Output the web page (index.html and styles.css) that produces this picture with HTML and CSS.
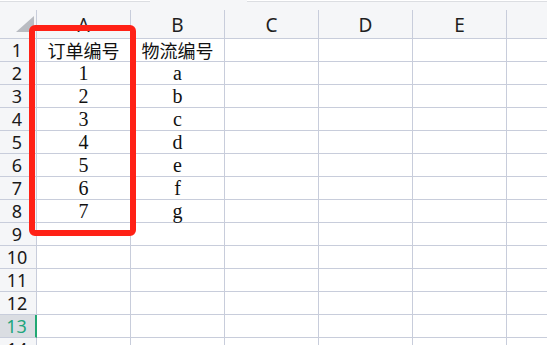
FILE: index.html
```html
<!DOCTYPE html>
<html lang="zh-CN">
<head>
  <meta charset="UTF-8">
  <title>工作表</title>
  <link rel="stylesheet" href="styles.css">
</head>
<body>
  <div class="topbar">
    <div class="box box-left"></div>
    <div class="box-gap"></div>
    <div class="box box-right"></div>
  </div>

  <div class="sheet">
    <div class="cell corner">
      <svg width="18" height="16" viewBox="0 0 18 16"><polygon points="0,16 18,16 18,0" fill="#b9bcc2"/></svg>
    </div>
    <div class="cell colhead">A</div>
    <div class="cell colhead">B</div>
    <div class="cell colhead">C</div>
    <div class="cell colhead">D</div>
    <div class="cell colhead">E</div>
    <div class="cell colhead"></div>

    <div class="cell rowhead">1</div>
    <div class="cell data cjk">订单编号</div>
    <div class="cell data cjk">物流编号</div>
    <div class="cell"></div><div class="cell"></div><div class="cell"></div><div class="cell"></div>

    <div class="cell rowhead">2</div>
    <div class="cell data">1</div><div class="cell data">a</div>
    <div class="cell"></div><div class="cell"></div><div class="cell"></div><div class="cell"></div>

    <div class="cell rowhead">3</div>
    <div class="cell data">2</div><div class="cell data">b</div>
    <div class="cell"></div><div class="cell"></div><div class="cell"></div><div class="cell"></div>

    <div class="cell rowhead">4</div>
    <div class="cell data">3</div><div class="cell data">c</div>
    <div class="cell"></div><div class="cell"></div><div class="cell"></div><div class="cell"></div>

    <div class="cell rowhead">5</div>
    <div class="cell data">4</div><div class="cell data">d</div>
    <div class="cell"></div><div class="cell"></div><div class="cell"></div><div class="cell"></div>

    <div class="cell rowhead">6</div>
    <div class="cell data">5</div><div class="cell data">e</div>
    <div class="cell"></div><div class="cell"></div><div class="cell"></div><div class="cell"></div>

    <div class="cell rowhead">7</div>
    <div class="cell data">6</div><div class="cell data">f</div>
    <div class="cell"></div><div class="cell"></div><div class="cell"></div><div class="cell"></div>

    <div class="cell rowhead">8</div>
    <div class="cell data">7</div><div class="cell data">g</div>
    <div class="cell"></div><div class="cell"></div><div class="cell"></div><div class="cell"></div>

    <div class="cell rowhead">9</div>
    <div class="cell"></div><div class="cell"></div><div class="cell"></div>
    <div class="cell"></div><div class="cell"></div><div class="cell"></div>

    <div class="cell rowhead">10</div>
    <div class="cell"></div><div class="cell"></div><div class="cell"></div>
    <div class="cell"></div><div class="cell"></div><div class="cell"></div>

    <div class="cell rowhead">11</div>
    <div class="cell"></div><div class="cell"></div><div class="cell"></div>
    <div class="cell"></div><div class="cell"></div><div class="cell"></div>

    <div class="cell rowhead">12</div>
    <div class="cell"></div><div class="cell"></div><div class="cell"></div>
    <div class="cell"></div><div class="cell"></div><div class="cell"></div>

    <div class="cell rowhead active">13</div>
    <div class="cell"></div><div class="cell"></div><div class="cell"></div>
    <div class="cell"></div><div class="cell"></div><div class="cell"></div>

    <div class="cell rowhead">14</div>
    <div class="cell"></div><div class="cell"></div><div class="cell"></div>
    <div class="cell"></div><div class="cell"></div><div class="cell"></div>
  </div>

  <div class="mark"></div>
</body>
</html>
```

FILE: styles.css
```css
body {
  margin: 0;
  width: 547px;
  height: 345px;
  overflow: hidden;
  background: #fff;
  position: relative;
  font-family: "Noto Sans", "Liberation Sans", sans-serif;
}
.topbar {
  display: flex;
  height: 10px;
  background: #f5f6f8;
}
.box {
  height: 1px;
  border-bottom: 1px solid #dcdee2;
  background: #fff;
}
.box-left { width: 150px; }
.box-gap { width: 97px; }
.box-right { flex: 1; }

.sheet {
  display: grid;
  grid-template-columns: 37px repeat(6, 94px);
  grid-template-rows: 29px repeat(14, 23px);
}
.cell {
  box-sizing: border-box;
  border-right: 1px solid #c8cddb;
  border-bottom: 1px solid #c8cddb;
  display: flex;
  align-items: center;
  justify-content: center;
  white-space: nowrap;
}
.corner {
  background: #f5f6f8;
  align-items: flex-end;
  justify-content: flex-end;
  padding: 0 2px 6px 0;
}
.colhead {
  background: #f5f6f8;
  font-size: 19px;
  color: #1f1f1f;
  padding-top: 2px;
}
.rowhead {
  background: #f5f6f8;
  font-size: 18px;
  color: #1a1a1a;
  padding-right: 2px;
}
.rowhead.active {
  background: #dadde2;
  color: #22a57c;
  border-right: 2px solid #21a873;
}
.data {
  font-family: "Liberation Serif", "Noto Sans CJK SC", serif;
  font-size: 20px;
  color: #111;
}
.data.cjk {
  font-family: "Noto Sans CJK SC", sans-serif;
  font-size: 18px;
}
.mark {
  position: absolute;
  left: 29px;
  top: 25px;
  width: 107px;
  height: 211px;
  box-sizing: border-box;
  border: 6px solid #ff2116;
  border-radius: 6px;
}
```
